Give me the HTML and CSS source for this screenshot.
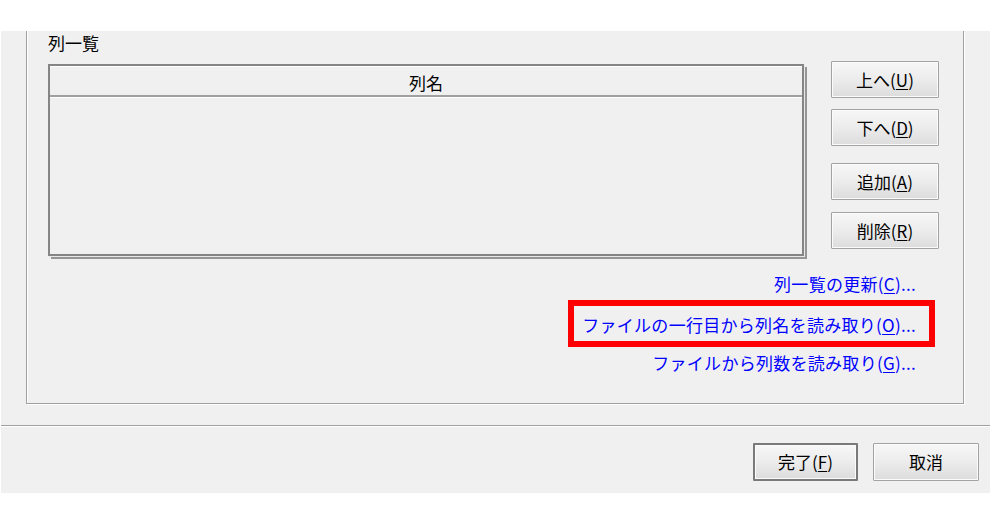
FILE: index.html
```html
<!DOCTYPE html>
<html lang="ja">
<head>
<meta charset="utf-8">
<title>列一覧</title>
<link rel="stylesheet" href="styles.css">
</head>
<body>
<div class="panel">
  <div class="group">
    <div class="group-label">列一覧</div>
    <div class="group-row">
      <div class="list">
        <div class="list-header">列名</div>
        <div class="list-body"></div>
      </div>
      <div class="side-buttons">
        <button class="btn btn-up">上へ(<u>U</u>)</button>
        <button class="btn btn-down">下へ(<u>D</u>)</button>
        <button class="btn btn-add">追加(<u>A</u>)</button>
        <button class="btn btn-del">削除(<u>R</u>)</button>
      </div>
    </div>
    <div class="links">
      <a class="link link-refresh">列一覧の更新(<u>C</u>)...</a>
      <a class="link link-first"><span class="link-text">ファイルの一行目から列名を読み取り(<u>O</u>)...</span></a>
      <a class="link link-count">ファイルから列数を読み取り(<u>G</u>)...</a>
    </div>
  </div>
  <div class="separator"></div>
  <div class="footer">
    <button class="btn btn-default">完了(<u>F</u>)</button>
    <button class="btn btn-cancel">取消</button>
  </div>
</div>
</body>
</html>
```

FILE: styles.css
```css
html, body {
  margin: 0;
  padding: 0;
  background: #ffffff;
}

body {
  font-family: "Noto Sans CJK JP", "Noto Sans", sans-serif;
  font-size: 17px;
  color: #000;
}

.panel {
  margin: 31px 0 0 1px;
  height: 462px;
  background: #f0f0f0;
  display: flex;
  flex-direction: column;
}

.group {
  margin: 0 26px 0 25px;
  height: 372px;
  border-left: 1px solid #a0a0a0;
  border-right: 1px solid #a0a0a0;
  border-bottom: 1px solid #a0a0a0;
  box-shadow: inset 1px 0 0 #ffffff, 1px 1px 0 #ffffff;
  padding: 0 23px 0 21px;
  display: flex;
  flex-direction: column;
}

.group-label {
  padding-top: 2px;
  height: 28px;
  line-height: 20px;
}

.group-row {
  display: flex;
  gap: 27px;
  height: 198px;
}

.list {
  box-sizing: border-box;
  width: 756px;
  height: 192px;
  margin-top: 3px;
  border: 2px solid #858585;
  box-shadow: 1px 1px 0 #e8e8e8, 3px 3px 0 #969696;
  display: flex;
  flex-direction: column;
  background: #f0f0f0;
}

.list-header {
  height: 31px;
  line-height: 31px;
  text-align: center;
  border-top: 1px solid #ffffff;
  border-bottom: 2px solid #a0a0a0;
  box-shadow: 0 1px 0 #ffffff;
  box-sizing: border-box;
}

.list-body {
  flex: 1;
}

.side-buttons {
  display: flex;
  flex-direction: column;
  width: 108px;
}

.btn {
  box-sizing: border-box;
  width: 108px;
  height: 37px;
  padding: 0;
  font-family: inherit;
  font-size: 17px;
  color: #000;
  border: 1px solid #a3a3a3;
  border-radius: 1px;
  background: linear-gradient(#f7f7f7, #ececec 50%, #dcdcdc);
  box-shadow: inset 0 0 0 1px #fbfbfb;
  line-height: 35px;
}

.btn u {
  text-underline-offset: 2px;
}

.btn-down {
  margin-top: 11px;
}

.btn-add {
  margin-top: 17px;
}

.btn-del {
  margin-top: 12px;
}

.links {
  display: flex;
  flex-direction: column;
  align-items: flex-end;
  padding-right: 24px;
}

.link {
  color: #0000ff;
  line-height: 22px;
  letter-spacing: 0.28px;
  cursor: pointer;
}

.link u {
  text-underline-offset: 2px;
}

.link-refresh {
  margin-top: 14px;
}

.link-first {
  margin-top: 19px;
  position: relative;
}

.link-first::after {
  content: "";
  position: absolute;
  top: -14px;
  bottom: -11px;
  left: -14px;
  right: -19px;
  border: 6px solid #ff0000;
}

.link-count {
  margin-top: 16px;
}

.separator {
  margin-top: 21px;
  height: 1px;
  background: #a0a0a0;
  border-bottom: 1px solid #ffffff;
}

.footer {
  display: flex;
  justify-content: flex-end;
  gap: 15px;
  padding: 16px 11px 0 0;
}

.btn-default {
  width: 105px;
  height: 38px;
  border: 2px solid #7a7a7a;
  line-height: 34px;
}

.btn-cancel {
  width: 106px;
  height: 38px;
  line-height: 36px;
}
```
